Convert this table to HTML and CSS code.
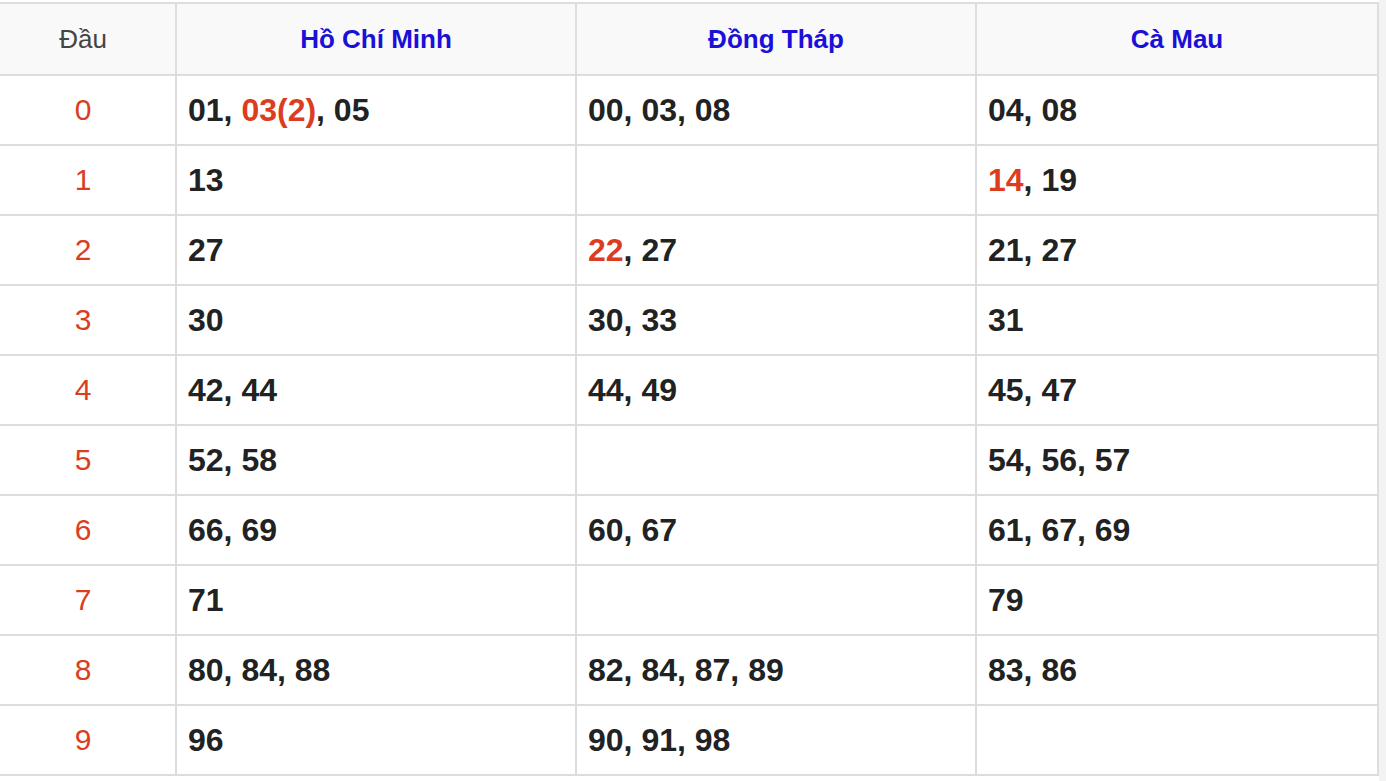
FILE: index.html
```html
<!DOCTYPE html>
<html lang="vi">
<head>
<meta charset="utf-8">
<title>Thống kê đầu lô tô</title>
<link rel="stylesheet" href="styles.css">
</head>
<body>
<div class="page">
  <table class="loto">
    <colgroup>
      <col class="c-head">
      <col class="c-prov">
      <col class="c-prov">
      <col class="c-last">
    </colgroup>
    <thead>
      <tr>
        <th class="dau">Đầu</th>
        <th>Hồ Chí Minh</th>
        <th>Đồng Tháp</th>
        <th>Cà Mau</th>
      </tr>
    </thead>
    <tbody>
      <tr><td class="dau">0</td><td>01, <span class="hot">03(2)</span>, 05</td><td>00, 03, 08</td><td>04, 08</td></tr>
      <tr><td class="dau">1</td><td>13</td><td></td><td><span class="hot">14</span>, 19</td></tr>
      <tr><td class="dau">2</td><td>27</td><td><span class="hot">22</span>, 27</td><td>21, 27</td></tr>
      <tr><td class="dau">3</td><td>30</td><td>30, 33</td><td>31</td></tr>
      <tr><td class="dau">4</td><td>42, 44</td><td>44, 49</td><td>45, 47</td></tr>
      <tr><td class="dau">5</td><td>52, 58</td><td></td><td>54, 56, 57</td></tr>
      <tr><td class="dau">6</td><td>66, 69</td><td>60, 67</td><td>61, 67, 69</td></tr>
      <tr><td class="dau">7</td><td>71</td><td></td><td>79</td></tr>
      <tr><td class="dau">8</td><td>80, 84, 88</td><td>82, 84, 87, 89</td><td>83, 86</td></tr>
      <tr><td class="dau">9</td><td>96</td><td>90, 91, 98</td><td></td></tr>
    </tbody>
  </table>
  <div class="track"></div>
</div>
</body>
</html>
```

FILE: styles.css
```css
html, body {
  margin: 0;
  padding: 0;
  background: #ffffff;
  font-family: "Liberation Sans", Arial, Helvetica, sans-serif;
}

.page {
  display: flex;
  align-items: flex-start;
  min-height: 781px;
  overflow: hidden;
}

.loto {
  flex: none;
  width: 1390px;
  margin: 2px 0 0 -11px;
  table-layout: fixed;
  border-collapse: separate;
  border-spacing: 2px;
  background: #dddddd;
}

.c-head { width: 184px; }
.c-prov { width: 398px; }
.c-last { width: 400px; }

.loto th {
  height: 70px;
  padding: 0 11px;
  background: #f9f9f9;
  color: #1b10d8;
  font-size: 26px;
  font-weight: bold;
  text-align: center;
}

.loto th.dau {
  color: #444444;
  font-weight: normal;
}

.loto td {
  height: 68px;
  padding: 0 11px;
  background: #ffffff;
  color: #222222;
  font-size: 32px;
  font-weight: bold;
  text-align: left;
  white-space: nowrap;
}

.loto td.dau {
  color: #dc3d1e;
  font-size: 30px;
  font-weight: normal;
  text-align: center;
}

.hot {
  color: #dc3d1e;
}

.track {
  flex: 1;
  align-self: stretch;
  min-height: 781px;
  background: #f3f3f3;
}
```
